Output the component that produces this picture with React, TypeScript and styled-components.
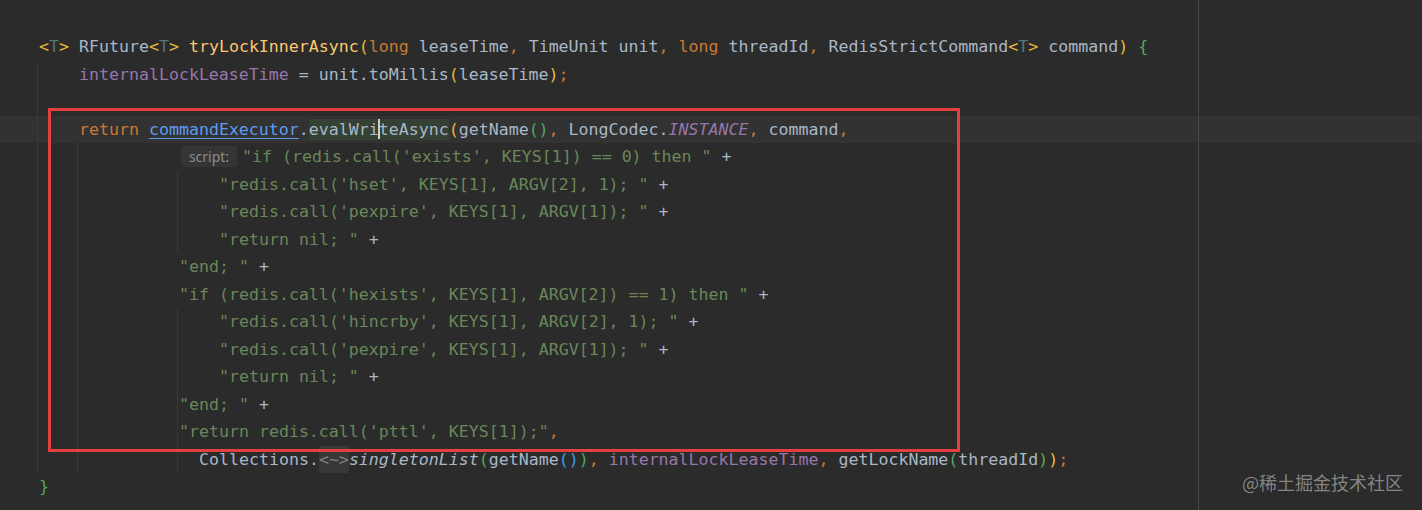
import React from 'react';
import styled, { createGlobalStyle } from 'styled-components';

const GlobalStyle = createGlobalStyle`
  html, body { margin: 0; padding: 0; background: #2b2b2b; }
  #root { width: 1422px; height: 510px; }
`;

const Editor = styled.div`
  position: relative;
  width: 1422px;
  height: 510px;
  overflow: hidden;
  background: #2b2b2b;
  font-family: "DejaVu Sans Mono", "Liberation Mono", monospace;
  font-size: 16.6px;
  color: #a9b7c6;
`;

const Code = styled.div`
  display: flex;
  flex-direction: column;
  padding-top: 33px;
`;

const Row = styled.div<{ $indent: number; $current?: boolean }>`
  position: relative;
  height: 27.5px;
  display: flex;
  align-items: center;
  white-space: pre;
  padding-left: ${(p) => 39 + p.$indent * 10}px;
  background: ${(p) => (p.$current ? '#323232' : 'transparent')};
`;

const LineText = styled.span`
  position: relative;
  z-index: 1;
  display: inline-flex;
  align-items: center;
  height: 100%;
`;

const Guide = styled.span<{ $col: number }>`
  position: absolute;
  top: 0;
  bottom: 0;
  left: ${(p) => 37 + p.$col * 10}px;
  width: 1px;
  background: #393939;
`;

const colors: Record<string, string> = {
  d: '#a9b7c6',
  k: '#cc7832',
  y: '#e8ba36',
  g: '#54a857',
  b: '#359ff4',
  tp: '#507874',
  m: '#ffc66d',
  f: '#9876aa',
  fi: '#9876aa',
  s: '#6a8759',
  it: '#a9b7c6',
  link: '#5f9bef',
  hl: '#a9b7c6',
};

const Tok = styled.span<{ $kind: string }>`
  color: ${(p) => colors[p.$kind] || '#a9b7c6'};
  font-style: ${(p) => (p.$kind === 'fi' || p.$kind === 'it' ? 'italic' : 'normal')};
  text-decoration: ${(p) => (p.$kind === 'link' ? 'underline' : 'none')};
  text-underline-offset: 3px;
  background: ${(p) => (p.$kind === 'hl' ? '#344134' : 'transparent')};
  padding: ${(p) => (p.$kind === 'hl' ? '1px 0' : '0')};
`;

const Caret = styled.span`
  display: inline-block;
  width: 2px;
  height: 20px;
  margin: 0 -1px;
  background: #cfcfcf;
  vertical-align: middle;
  position: relative;
`;

const Hint = styled.span`
  display: inline-flex;
  align-items: center;
  justify-content: center;
  width: 56px;
  height: 21px;
  margin: 0 5px 0 2px;
  border-radius: 3px;
  background: #353535;
  color: #8c8c8c;
  font-family: "Noto Sans", "Open Sans", sans-serif;
  font-size: 14px;
`;

const Fold = styled.span`
  display: inline-flex;
  align-items: center;
  height: 27.5px;
  background: #383838;
  color: #808080;
`;

const RightMargin = styled.div`
  position: absolute;
  top: 0;
  bottom: 0;
  left: 1198px;
  width: 1px;
  background: #474747;
  z-index: 2;
`;

const Annotation = styled.div`
  position: absolute;
  left: 48px;
  top: 108px;
  width: 912px;
  height: 344px;
  box-sizing: border-box;
  border: 3px solid #e53f3f;
  z-index: 3;
  pointer-events: none;
`;

const Watermark = styled.div`
  position: absolute;
  right: 19px;
  top: 469px;
  font-family: "Noto Sans CJK SC", "Noto Sans", sans-serif;
  font-size: 18px;
  color: rgba(150, 150, 150, 0.85);
  z-index: 4;
`;

type Part = [string, string];

interface Line {
  indent: number;
  guides: number[];
  current?: boolean;
  parts: Part[];
}

const plus: Part = ['d', ' +'];

const lines: Line[] = [
  {
    indent: 0,
    guides: [],
    parts: [
      ['y', '<'], ['tp', 'T'], ['y', '>'], ['d', ' RFuture'], ['y', '<'], ['tp', 'T'], ['y', '>'], ['d', ' '],
      ['m', 'tryLockInnerAsync'], ['y', '('], ['k', 'long'], ['d', ' leaseTime'], ['k', ','],
      ['d', ' TimeUnit unit'], ['k', ','], ['d', ' '], ['k', 'long'], ['d', ' threadId'], ['k', ','],
      ['d', ' RedisStrictCommand'], ['y', '<'], ['tp', 'T'], ['y', '>'], ['d', ' command'], ['y', ')'],
      ['d', ' '], ['g', '{'],
    ],
  },
  {
    indent: 4,
    guides: [0],
    parts: [
      ['f', 'internalLockLeaseTime'], ['d', ' = unit.toMillis'], ['y', '('], ['d', 'leaseTime'], ['y', ')'], ['k', ';'],
    ],
  },
  { indent: 4, guides: [0], parts: [] },
  {
    indent: 4,
    guides: [0],
    current: true,
    parts: [
      ['k', 'return'], ['d', ' '], ['link', 'commandExecutor'], ['d', '.'], ['hl', 'evalWri'], ['caret', ''],
      ['hl', 'teAsync'], ['y', '('], ['d', 'getName'], ['g', '()'], ['k', ','], ['d', ' LongCodec.'],
      ['fi', 'INSTANCE'], ['k', ','], ['d', ' command'], ['k', ','],
    ],
  },
  {
    indent: 14,
    guides: [0, 4],
    parts: [['hint', 'script:'], ['s', `"if (redis.call('exists', KEYS[1]) == 0) then "`], plus],
  },
  { indent: 18, guides: [0, 4, 14], parts: [['s', `"redis.call('hset', KEYS[1], ARGV[2], 1); "`], plus] },
  { indent: 18, guides: [0, 4, 14], parts: [['s', `"redis.call('pexpire', KEYS[1], ARGV[1]); "`], plus] },
  { indent: 18, guides: [0, 4, 14], parts: [['s', `"return nil; "`], plus] },
  { indent: 14, guides: [0, 4], parts: [['s', `"end; "`], plus] },
  { indent: 14, guides: [0, 4], parts: [['s', `"if (redis.call('hexists', KEYS[1], ARGV[2]) == 1) then "`], plus] },
  { indent: 18, guides: [0, 4, 14], parts: [['s', `"redis.call('hincrby', KEYS[1], ARGV[2], 1); "`], plus] },
  { indent: 18, guides: [0, 4, 14], parts: [['s', `"redis.call('pexpire', KEYS[1], ARGV[1]); "`], plus] },
  { indent: 18, guides: [0, 4, 14], parts: [['s', `"return nil; "`], plus] },
  { indent: 14, guides: [0, 4, 14], parts: [['s', `"end; "`], plus] },
  { indent: 14, guides: [0, 4, 14], parts: [['s', `"return redis.call('pttl', KEYS[1]);"`], ['k', ',']] },
  {
    indent: 16,
    guides: [0, 4, 14],
    parts: [
      ['d', 'Collections.'], ['fold', '<~>'], ['it', 'singletonList'], ['g', '('], ['d', 'getName'], ['b', '()'],
      ['g', ')'], ['k', ','], ['d', ' '], ['f', 'internalLockLeaseTime'], ['k', ','], ['d', ' getLockName'],
      ['g', '('], ['d', 'threadId'], ['g', ')'], ['y', ')'], ['k', ';'],
    ],
  },
  { indent: 0, guides: [], parts: [['g', '}']] },
];

function renderPart(part: Part, i: number) {
  const [kind, text] = part;
  if (kind === 'caret') return <Caret key={i} />;
  if (kind === 'hint') return <Hint key={i}>{text}</Hint>;
  if (kind === 'fold') return <Fold key={i}>{text}</Fold>;
  return (
    <Tok key={i} $kind={kind}>
      {text}
    </Tok>
  );
}

export default function App() {
  return (
    <>
      <GlobalStyle />
      <Editor>
        <Code>
          {lines.map((line, idx) => (
            <Row key={idx} $indent={line.indent} $current={line.current}>
              {line.guides.map((g) => (
                <Guide key={g} $col={g} />
              ))}
              <LineText>{line.parts.map(renderPart)}</LineText>
            </Row>
          ))}
        </Code>
        <RightMargin />
        <Annotation />
        <Watermark>@稀土掘金技术社区</Watermark>
      </Editor>
    </>
  );
}
